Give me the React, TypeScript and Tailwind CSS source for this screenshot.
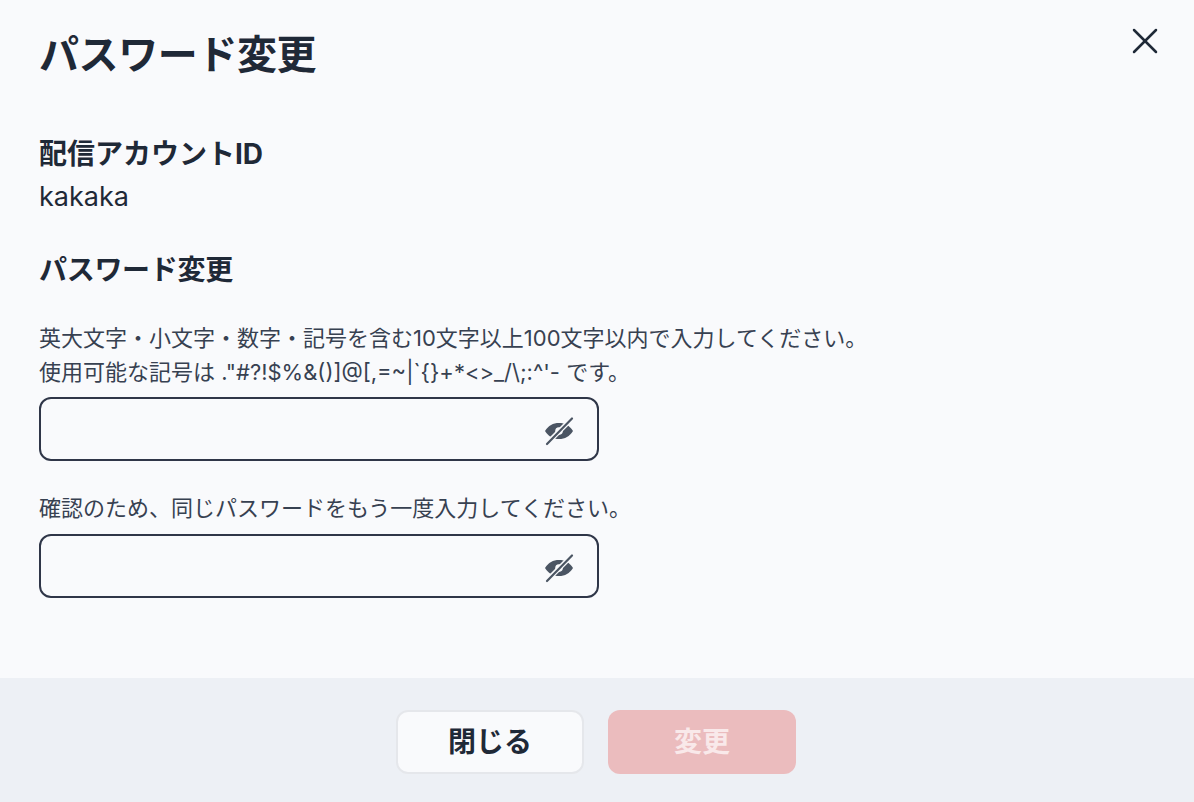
import { X } from 'lucide-react';

function EyeOff() {
  return (
    <svg className="mt-[4px]" width="30" height="30" viewBox="0 0 30 30" fill="none">
      <path
        d="M1 15C4.500 9.500 9 7 15 7s10.500 2.500 14 8c-3.500 5.500-8 8-14 8S4.500 20.500 1 15Z"
        fill="#4b5563"
      />
      <circle cx="15" cy="15" r="3.800" fill="#f9fafc" />
      <path d="M4 26.500 27 3.500" stroke="#f9fafc" strokeWidth="5" />
      <path d="M3 28 28 2.500" stroke="#4b5563" strokeWidth="2.200" strokeLinecap="round" />
    </svg>
  );
}

function PasswordInput() {
  return (
    <div className="flex h-[64px] w-[560px] items-center justify-end rounded-[12px] border-2 border-[#2f3648] bg-[#f9fafc] pr-[23px]">
      <EyeOff />
    </div>
  );
}

export default function App() {
  return (
    <div className="flex h-[802px] w-[1194px] flex-col overflow-hidden bg-[#f9fafc] font-['Inter','Noto_Sans_CJK_JP',sans-serif] text-[#1f2937]">
      <div className="relative flex-1 pl-[39px] pt-[27px]">
        <button className="absolute right-[27px] top-[19px] text-[#1f2937]">
          <X size={44} strokeWidth={1.360} />
        </button>
        <h1 className="text-[40px] font-bold leading-[56px] tracking-[-0.4px]">パスワード変更</h1>
        <h2 className="mt-[51px] text-[28px] font-bold leading-[40px]">配信アカウントID</h2>
        <p className="mt-[3px] text-[27px] leading-[40px]">kakaka</p>
        <h2 className="mt-[33px] text-[28px] font-bold leading-[40px] tracking-[-0.3px]">パスワード変更</h2>
        <p className="mt-[31px] text-[22px] leading-[34px] text-[#374151]">
          英大文字・小文字・数字・記号を含む10文字以上100文字以内で入力してください。
          <br />
          使用可能な記号は ."#?!$%&amp;()]@[,=~|`{'{}'}+*&lt;&gt;_/\;:^'- です。
        </p>
        <div className="mt-[8px]">
          <PasswordInput />
        </div>
        <p className="mt-[30px] text-[22px] leading-[34px] text-[#374151]">
          確認のため、同じパスワードをもう一度入力してください。
        </p>
        <div className="mt-[9px]">
          <PasswordInput />
        </div>
      </div>
      <div className="flex h-[124px] justify-center gap-[24px] bg-[#edf0f5] pr-[2px] pt-[32px]">
        <button className="h-[64px] w-[188px] rounded-[12px] border-2 border-[#e5e7eb] bg-[#f9fafc] text-[28px] font-bold text-[#1f2937]">
          閉じる
        </button>
        <button className="h-[64px] w-[188px] rounded-[12px] bg-[#ebbcbe] text-[28px] font-bold text-[#f9e9ea]">
          変更
        </button>
      </div>
    </div>
  );
}
